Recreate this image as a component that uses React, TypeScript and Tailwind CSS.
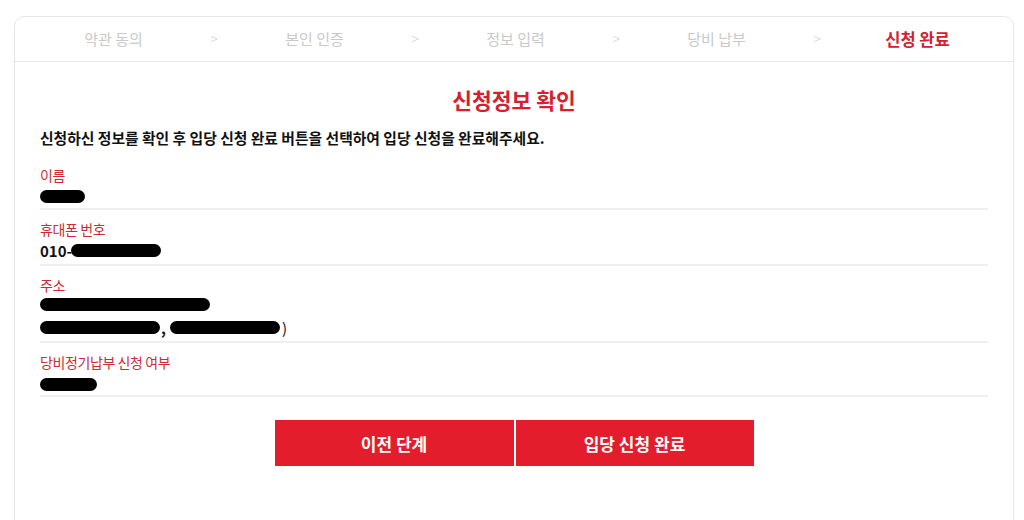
const steps = ["약관 동의", "본인 인증", "정보 입력", "당비 납부", "신청 완료"];

function Blob({ w, className = "" }: { w: string; className?: string }) {
  return (
    <span
      className={`inline-block h-[13px] rounded-full bg-black align-middle blur-[0.4px] ${w} ${className}`}
    />
  );
}

function Row({
  label,
  children,
}: {
  label: string;
  children: React.ReactNode;
}) {
  return (
    <div className="border-b-2 border-[#f0f0f0] pt-[10px] pb-[4px]">
      <p className="text-[14px] leading-[19px] tracking-[-0.4px] text-[#cc2a38]">
        {label}
      </p>
      <div className="text-[15px] font-bold leading-[19px] text-[#111]">
        {children}
      </div>
    </div>
  );
}

export default function App() {
  return (
    <div
      className="h-[520px] overflow-hidden bg-white pl-[14px] pr-[10px] pt-[16px]"
      style={{ fontFamily: '"Noto Sans CJK KR", "Noto Sans", sans-serif' }}
    >
      <div className="h-[520px] rounded-t-[10px] border border-[#e7e7e7]">
        <div className="-ml-[2px] grid h-[45px] grid-cols-[repeat(5,201px)] border-b border-[#e8e8e8]">
          {steps.map((s, i) => {
            const active = i === steps.length - 1;
            return (
              <div
                key={s}
                className="relative flex items-center justify-center"
              >
                <span
                  className={
                    active
                      ? "text-[16.5px] font-bold text-[#d4202f]"
                      : "text-[15px] text-[#c9c9c9]"
                  }
                >
                  {s}
                </span>
                {!active && (
                  <span className="absolute right-[-4px] top-[11px] text-[14px] font-light text-[#cfcfcf]">
                    &gt;
                  </span>
                )}
              </div>
            );
          })}
        </div>

        <div className="pl-[25px] pr-[25px]">
          <h1 className="mt-[24px] text-center text-[21.5px] font-bold leading-[28px] text-[#d4202f]">
            신청정보 확인
          </h1>
          <p className="mt-[14px] text-[14.8px] font-bold leading-[20px] text-[#111]">
            신청하신 정보를 확인 후 입당 신청 완료 버튼을 선택하여 입당 신청을 완료해주세요.
          </p>

          <div className="mt-[8px]">
            <Row label="이름">
              <Blob w="w-[45px]" />
            </Row>
            <Row label="휴대폰 번호">
              <span className="align-middle">010-</span>
              <Blob w="w-[90px]" className="-ml-[1px]" />
            </Row>
            <Row label="주소">
              <div className="flex h-[19px] items-center">
                <Blob w="w-[170px]" />
              </div>
              <div className="mt-[4px] flex h-[19px] items-center">
                <Blob w="w-[120px]" />
                <span className="ml-[1px] mr-[4px]">,</span>
                <Blob w="w-[110px]" />
                <span className="ml-[2px] font-normal">)</span>
              </div>
            </Row>
            <Row label="당비정기납부 신청 여부">
              <Blob w="w-[57px]" />
            </Row>
          </div>

          <div className="mt-[23px] flex justify-center gap-[2px]">
            <button className="h-[46px] w-[239px] bg-[#e31d2b] text-[17px] font-bold text-white">
              이전 단계
            </button>
            <button className="h-[46px] w-[238px] bg-[#e31d2b] text-[17px] font-bold text-white">
              입당 신청 완료
            </button>
          </div>
        </div>
      </div>
    </div>
  );
}
